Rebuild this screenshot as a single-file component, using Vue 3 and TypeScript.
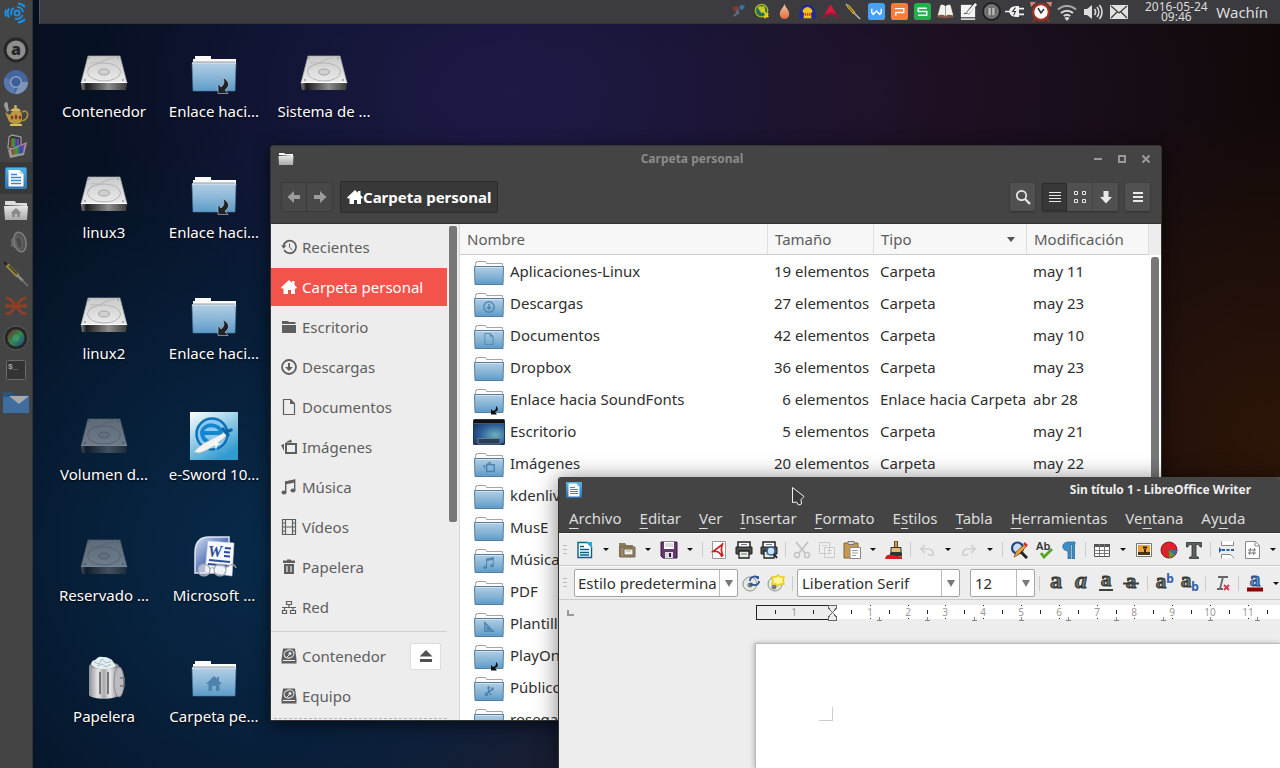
<script setup lang="ts">
interface Shortcut { icon: string; label: string; dim?: boolean }
interface FileRow { icon: string; emblem?: string; name: string; size: string; type: string; modified: string }
interface Tool { kind: 'icon' | 'arrow' | 'sep'; icon?: string; label?: string; off?: boolean }

const icon = (name: string, label: string, off = false): Tool => ({ kind: 'icon', icon: name, label, off })
const arrow = (label: string): Tool => ({ kind: 'arrow', label })
const sep: Tool = { kind: 'sep' }

const dock = [
  { icon: 'd-amazon', label: 'Amazon' },
  { icon: 'd-chromium', label: 'Chromium' },
  { icon: 'd-teapot', label: 'Tetera' },
  { icon: 'd-laptop', label: 'Pantallas' },
  { icon: 'd-writer', label: 'LibreOffice Writer', active: true },
  { icon: 'd-home', label: 'Archivos' },
  { icon: 'd-speaker', label: 'Sonido' },
  { icon: 'd-jack', label: 'Conexiones de audio' },
  { icon: 'd-x', label: 'Xmind' },
  { icon: 'd-lens', label: 'Cámara' },
  { icon: 'd-term', label: 'Terminal' },
  { icon: 'd-mail', label: 'Correo' },
]

const trayA = ['t-sat', 't-globe', 't-drop', 't-head', 't-tri', 't-jack', 't-w', 't-p', 't-s', 't-book', 't-note', 't-pause', 't-plug']
const trayB = ['t-alarm', 't-wifi', 't-vol', 't-env']

const shortcuts: Shortcut[] = [
  { icon: 'hdd', label: 'Contenedor' },
  { icon: 'hdd', label: 'linux3' },
  { icon: 'hdd', label: 'linux2' },
  { icon: 'hdd', label: 'Volumen d...', dim: true },
  { icon: 'hdd', label: 'Reservado ...', dim: true },
  { icon: 'trash', label: 'Papelera' },
  { icon: 'folder-link', label: 'Enlace haci...' },
  { icon: 'folder-link', label: 'Enlace haci...' },
  { icon: 'folder-link', label: 'Enlace haci...' },
  { icon: 'esword', label: 'e-Sword 10...' },
  { icon: 'msword', label: 'Microsoft ...' },
  { icon: 'folder-home', label: 'Carpeta pe...' },
  { icon: 'hdd', label: 'Sistema de ...' },
]

const places = [
  { icon: 's-recent', label: 'Recientes' },
  { icon: 's-home', label: 'Carpeta personal', active: true },
  { icon: 's-folder', label: 'Escritorio' },
  { icon: 's-down', label: 'Descargas' },
  { icon: 's-doc', label: 'Documentos' },
  { icon: 's-pic', label: 'Imágenes' },
  { icon: 's-music', label: 'Música' },
  { icon: 's-film', label: 'Vídeos' },
  { icon: 's-bin', label: 'Papelera' },
  { icon: 's-net', label: 'Red' },
]

const files: FileRow[] = [
  { icon: 'folder', name: 'Aplicaciones-Linux', size: '19 elementos', type: 'Carpeta', modified: 'may 11' },
  { icon: 'folder', emblem: 's-down', name: 'Descargas', size: '27 elementos', type: 'Carpeta', modified: 'may 23' },
  { icon: 'folder', emblem: 's-doc', name: 'Documentos', size: '42 elementos', type: 'Carpeta', modified: 'may 10' },
  { icon: 'folder', name: 'Dropbox', size: '36 elementos', type: 'Carpeta', modified: 'may 23' },
  { icon: 'folder', emblem: 'link', name: 'Enlace hacia SoundFonts', size: '6 elementos', type: 'Enlace hacia Carpeta', modified: 'abr 28' },
  { icon: 'desktop', name: 'Escritorio', size: '5 elementos', type: 'Carpeta', modified: 'may 21' },
  { icon: 'folder', emblem: 's-pic', name: 'Imágenes', size: '20 elementos', type: 'Carpeta', modified: 'may 22' },
  { icon: 'folder', name: 'kdenlive', size: '', type: '', modified: '' },
  { icon: 'folder', name: 'MusE', size: '', type: '', modified: '' },
  { icon: 'folder', emblem: 's-music', name: 'Música', size: '', type: '', modified: '' },
  { icon: 'folder', name: 'PDF', size: '', type: '', modified: '' },
  { icon: 'folder', emblem: 'e-square', name: 'Plantillas', size: '', type: '', modified: '' },
  { icon: 'folder', emblem: 'link', name: 'PlayOnLinux', size: '', type: '', modified: '' },
  { icon: 'folder', emblem: 'e-share', name: 'Público', size: '', type: '', modified: '' },
  { icon: 'folder', name: 'rosegarden', size: '', type: '', modified: '' },
]

const menus = [
  ['', 'A', 'rchivo'], ['', 'E', 'ditar'], ['', 'V', 'er'], ['', 'I', 'nsertar'], ['', 'F', 'ormato'],
  ['E', 's', 'tilos'], ['', 'T', 'abla'], ['', 'H', 'erramientas'], ['Ve', 'n', 'tana'], ['Ay', 'u', 'da'],
]

const standardTools: Tool[] = [
  icon('w-new', 'Nuevo'), arrow('Más tipos'), icon('w-open', 'Abrir'), arrow('Recientes'), icon('w-save', 'Guardar'), arrow('Guardar como'),
  sep, icon('w-pdf', 'Exportar a PDF'), icon('w-print', 'Imprimir'), icon('w-preview', 'Vista previa'),
  sep, icon('w-cut', 'Cortar', true), icon('w-copy', 'Copiar', true), icon('w-paste', 'Pegar'), arrow('Pegado especial'), icon('w-brush', 'Clonar formato'),
  sep, icon('w-undo', 'Deshacer', true), arrow('Historial'), icon('w-redo', 'Rehacer', true), arrow('Historial de rehacer'),
  sep, icon('w-find', 'Buscar'), icon('w-spell', 'Ortografía'), icon('w-pilcrow', 'Marcas'),
  sep, icon('w-table', 'Tabla'), arrow('Tamaño de tabla'), icon('w-image', 'Imagen'), icon('w-chart', 'Gráfico'), icon('w-text', 'Cuadro de texto'),
  sep, icon('w-break', 'Salto de página'), icon('w-field', 'Campo'), arrow('Más campos'),
]

const formatTools: Tool[] = [
  sep, icon('w-bold', 'Negrita'), icon('w-italic', 'Cursiva'), icon('w-under', 'Subrayado'), icon('w-strike', 'Tachado'),
  sep, icon('w-super', 'Superíndice'), icon('w-sub', 'Subíndice'),
  sep, icon('w-clear', 'Limpiar formato'),
  sep, icon('w-color', 'Color de letra'), arrow('Colores'),
]

const pxPerCm = 37.8
const origin = 76
const cm = (n: number) => Math.round(origin + n * pxPerCm)
const rulerNumbers = Array.from({ length: 11 }, (_, i) => i + 1)
const rulerHalves = Array.from({ length: 14 }, (_, i) => i - 1.5)
const tabStops = Array.from({ length: 9 }, (_, i) => cm((i + 1) * 1.25))
</script>

<template>
  <main class="desktop">
    <svg class="sprite" aria-hidden="true">
      <defs>
        <linearGradient id="gFolder" x1="0" y1="0" x2="0" y2="1"><stop offset="0" stop-color="#b1cee4" /><stop offset=".55" stop-color="#86b4d6" /><stop offset="1" stop-color="#5c9bc9" /></linearGradient>
        <linearGradient id="gHdd" x1="0" y1="0" x2="0" y2="1"><stop offset="0" stop-color="#c9c9c9" /><stop offset="1" stop-color="#ececec" /></linearGradient>
        <linearGradient id="gHddF" x1="0" y1="0" x2="1" y2="0"><stop offset="0" stop-color="#8a8a8a" /><stop offset=".12" stop-color="#1c1c1c" /><stop offset=".6" stop-color="#8c8c8c" /><stop offset="1" stop-color="#3a3a3a" /></linearGradient>
        <linearGradient id="gCan" x1="0" y1="0" x2="1" y2="0"><stop offset="0" stop-color="#8f8f94" /><stop offset=".3" stop-color="#e6e6e8" /><stop offset=".5" stop-color="#a9a9ad" /><stop offset=".7" stop-color="#e9e9ea" /><stop offset="1" stop-color="#85858a" /></linearGradient>
        <linearGradient id="gSword" x1="0" y1="0" x2=".6" y2="1"><stop offset="0" stop-color="#fff" /><stop offset="1" stop-color="#2f9bd0" /></linearGradient>
        <linearGradient id="gWord" x1="0" y1="0" x2="1" y2="1"><stop offset="0" stop-color="#d8e0f2" /><stop offset=".5" stop-color="#5c79bd" /><stop offset="1" stop-color="#2c4a94" /></linearGradient>
        <linearGradient id="gWriter" x1="0" y1="0" x2="0" y2="1"><stop offset="0" stop-color="#53b5e8" /><stop offset="1" stop-color="#2a6fb5" /></linearGradient>
        <linearGradient id="gGray" x1="0" y1="0" x2="0" y2="1"><stop offset="0" stop-color="#e6e6e6" /><stop offset="1" stop-color="#a9a9a9" /></linearGradient>
        <linearGradient id="gDrop" x1="0" y1="0" x2="0" y2="1"><stop offset="0" stop-color="#f6c8a4" /><stop offset="1" stop-color="#e0693a" /></linearGradient>
        <radialGradient id="gDesk" cx=".7" cy=".6" r=".8"><stop offset="0" stop-color="#6fb0bf" /><stop offset=".6" stop-color="#2f619a" /><stop offset="1" stop-color="#1e3c6a" /></radialGradient>
        <linearGradient id="gLens" x1="0" y1="0" x2="1" y2="1"><stop offset="0" stop-color="#7a2a22" /><stop offset=".5" stop-color="#2e8a4e" /><stop offset="1" stop-color="#28408c" /></linearGradient>
        <linearGradient id="gRgb" x1="0" y1="0" x2="1" y2="0"><stop offset="0" stop-color="#b03228" /><stop offset=".4" stop-color="#3e9c36" /><stop offset=".7" stop-color="#3048b0" /><stop offset="1" stop-color="#b03aa0" /></linearGradient>
      </defs>
    </svg>

    <svg class="symbols" aria-hidden="true">
      <!-- launcher -->
      <symbol id="d-logo" viewBox="0 0 26 26"><g fill="none" stroke="#1a8fe3" stroke-width="2"><circle cx="14" cy="13" r="2.5" /><path d="M11 7.800a6 6 0 0 0-2.500 7.500M12 18.700a6 6 0 0 0 7.500-3.700M20 12a6 6 0 0 0-6-5" /><path d="M6 8.500a9 9 0 0 0 0 9M3 9.500a10 10 0 0 0 0 7M15 3.500a10 10 0 0 1 7 3.500M15 22.500a10 10 0 0 0 7-3.500" /></g></symbol>
      <symbol id="d-amazon" viewBox="0 0 26 26"><circle cx="13" cy="13" r="12.500" fill="#272727" /><circle cx="13" cy="13" r="9.500" fill="#8e8e8e" /><text x="13" y="18" text-anchor="middle" font-family="Noto Sans,sans-serif" font-weight="900" font-size="16" fill="#272727">a</text></symbol>
      <symbol id="d-chromium" viewBox="0 0 26 26"><circle cx="13" cy="13" r="12" fill="#44669c" /><path d="M13 13 1.800 8.500A12 12 0 0 0 11 24.800z" fill="#5878ae" /><path d="M13 13h12a12 12 0 0 1-13.500 11.900L17 15z" fill="#7d93b8" /><circle cx="13" cy="13" r="6" fill="#8fa2c0" /><circle cx="13" cy="13" r="4.600" fill="#3c5f9c" /></symbol>
      <symbol id="d-teapot" viewBox="0 0 26 26"><path d="M1 5c0-5 4-5 4-1s1 3 1 6l-2 1z" fill="#9b9b9b" /><path d="M2 11l5 3c1-3 3-5 6-5s6 2 6 5v5c-1 3-3 4-6 4s-7-1-8-5z" fill="#b99a41" /><path d="M19 11c7-4 8 7 0 9" fill="none" stroke="#a98d3a" stroke-width="1.800" /><path d="M7 10c2-4 9-4 11 0z" fill="#d0b661" /><circle cx="12.500" cy="5.500" r="1.500" fill="#d0b661" /><path d="M9 14l1.500 2.500L9 19l-1.500-2.500zM13 13l1.500 3-1.500 3-1.500-3zM17 14l1.500 2.500L17 19l-1.500-2.500z" fill="#8e2c33" /><path d="M7 24h12" stroke="#d8bd62" stroke-width="2" /></symbol>
      <symbol id="d-laptop" viewBox="0 0 26 26"><path d="M6 4l3-2 9 2v13L5 15z" fill="#333" stroke="#999" stroke-width="1.300" /><path d="M8 5l8 1v9l-9-1z" fill="url(#gRgb)" /><path d="M5 17l19-8-3 13-14 3z" fill="#999" /><path d="M8 17l14-6-2 9-11 2z" fill="url(#gRgb)" /></symbol>
      <symbol id="d-writer" viewBox="0 0 26 26"><rect x="2.500" y="2.500" width="21" height="21" rx="1.500" fill="url(#gWriter)" stroke="#3784bd" /><path d="M5.500 5h11l4 4v12.500h-15z" fill="#fff" /><path d="M16.500 5v4h4z" fill="#bcdcf0" /><path d="M8 9.500h6M8 12.500h10M8 15.500h10M8 18.500h10" stroke="#3f86c4" stroke-width="1.300" /></symbol>
      <symbol id="w-app" viewBox="0 0 16 16"><rect width="16" height="16" rx="1" fill="url(#gWriter)" /><path d="M2.500 1.500h8l3 3v10h-11z" fill="#fff" /><path d="M10.500 1.500v3h3z" fill="#bcdcf0" /><path d="M4 5.500h5M4 7.500h8M4 9.500h8M4 11.500h8" stroke="#3f86c4" /></symbol>
      <symbol id="d-home" viewBox="0 0 26 26"><path d="M2 8V4h10l1 2h11v3z" fill="#ddd" /><path d="M1 9h24l-1 14H2z" fill="url(#gGray)" /><path d="M13 11l5.500 5H17v4h-3v-3h-2v3H9v-4H7.500z" fill="#8b8b8b" /></symbol>
      <symbol id="d-speaker" viewBox="0 0 26 26"><path d="M8 10l6-4v14l-6-3z" fill="#666" /><ellipse cx="17" cy="13" rx="6" ry="10" fill="#555" stroke="#7d7d7d" stroke-width="1.500" transform="rotate(-12 17 13)" /><ellipse cx="16" cy="13.500" rx="3" ry="6" fill="#4a4a4a" stroke="#6d6d6d" transform="rotate(-12 16 13.500)" /></symbol>
      <symbol id="d-jack" viewBox="0 0 26 26"><path d="M1 1l5 5" stroke="#222" stroke-width="2" /><path d="M4 4l11 11" stroke="#94853f" stroke-width="4" /><path d="M6 5l8 8" stroke="#3b351c" stroke-width="1.300" /><path d="M14 14l6 6" stroke="#8b8b8b" stroke-width="2.500" /><path d="M19 19l6 6" stroke="#777" stroke-width="1.500" /></symbol>
      <symbol id="d-x" viewBox="0 0 26 26"><path d="M3 5c7 0 8 8 10 8s3-8 10-8M3 21c7 0 8-8 10-8s3 8 10 8M2 13h22" fill="none" stroke="#8d4027" stroke-width="3" /></symbol>
      <symbol id="d-lens" viewBox="0 0 26 26"><circle cx="13" cy="13" r="12" fill="#272727" stroke="#5a5a5a" /><circle cx="13" cy="13" r="8.500" fill="url(#gLens)" /><circle cx="13" cy="13" r="3.500" fill="#409a78" opacity=".7" /></symbol>
      <symbol id="d-term" viewBox="0 0 26 26"><rect x="3.500" y="3.500" width="19" height="19" rx="1" fill="#343434" stroke="#6a6a6a" /><text x="5" y="12" font-family="Liberation Mono,monospace" font-weight="700" font-size="8" fill="#a5a5a5">$_</text></symbol>
      <symbol id="d-mail" viewBox="0 0 26 26"><path d="M0 3h9l3 3h14v18H0z" fill="#2c5378" /><path d="M0 8h26v16H0z" fill="#3f6d9f" /><path d="M6 7h20l-10 8z" fill="#a9a9a9" /></symbol>

      <!-- tray -->
      <symbol id="t-sat" viewBox="0 0 20 20"><path d="M3 6l5-2 3 4-4 3z" fill="#7d3a35" /><path d="M10 6l3-3 4 1-3 5z" fill="#3f6d9f" /><path d="M7 9l3-1 1 4-3 2z" fill="#596a86" /><path d="M5 15l3-3" stroke="#777" stroke-width="1.500" /></symbol>
      <symbol id="t-globe" viewBox="0 0 20 20"><circle cx="10" cy="9" r="6.500" fill="#1e6b59" stroke="#a9b51c" stroke-width="1.500" /><path d="M6 6c2-3 4 0 7-2l1 5-4 3z" fill="#c8c41d" /><path d="M11 8l6 8M17 12l-4 5" stroke="#f0d020" stroke-width="2" fill="none" /></symbol>
      <symbol id="t-drop" viewBox="0 0 20 20"><path d="M10 2c1 4 5 6 5 11a5 5 0 0 1-10 0c0-5 4-7 5-11z" fill="url(#gDrop)" /></symbol>
      <symbol id="t-head" viewBox="0 0 20 20"><path d="M4 12a6 7 0 0 1 12 0v5H4z" fill="#f5c41c" /><path d="M3 12a7 8 0 0 1 14 0" fill="none" stroke="#1b2b9c" stroke-width="2.500" /><path d="M5 13h10" stroke="#e0401c" stroke-width="3" stroke-dasharray="1.500 .7" /><rect x="1.500" y="10" width="4.500" height="8" rx="2" fill="#20289a" /><rect x="14" y="10" width="4.500" height="8" rx="2" fill="#20289a" /></symbol>
      <symbol id="t-tri" viewBox="0 0 20 20"><path d="M10 2l8.500 15L10 13l-8.500 4z" fill="#d8193f" /><path d="M4 13l6-2 6 2 2.500 4L10 13l-8.500 4z" fill="#961538" /></symbol>
      <symbol id="t-jack" viewBox="0 0 20 20"><path d="M2 2l3 3" stroke="#bbb" stroke-width="1.500" /><path d="M4 4l7 8" stroke="#e0b83a" stroke-width="3" /><path d="M4 4l6 7" stroke="#473d16" stroke-width="1" /><path d="M11 12l6 6" stroke="#bbb" stroke-width="1.500" /></symbol>
      <symbol id="t-w" viewBox="0 0 20 20"><rect x="1" y="1" width="18" height="18" rx="3" fill="#45a2f7" /><path d="M5 7v4l1.500 2L10 9.500l3.500 3.500 1.500-2V7" fill="none" stroke="#fff" stroke-width="1.500" /></symbol>
      <symbol id="t-p" viewBox="0 0 20 20"><rect x="1" y="1" width="18" height="18" rx="3" fill="#fb7b3c" /><path d="M5 7h9.500v4H6v3.500" fill="none" stroke="#fff" stroke-width="1.500" /></symbol>
      <symbol id="t-s" viewBox="0 0 20 20"><rect x="1" y="1" width="18" height="18" rx="3" fill="#22b04c" /><path d="M14.500 6.500h-9v3.500h9v4h-9" fill="none" stroke="#fff" stroke-width="1.500" /></symbol>
      <symbol id="t-book" viewBox="0 0 20 20"><path d="M1 16l3-12 6 1 6-1 3 12-9 1z" fill="#7d5a45" /><path d="M2 14l3-11c2 0 4 0 5 2 1-2 3-2 5-2l3 11c-3-1-6-1-8 1-2-2-5-2-8-1z" fill="#f2f2ee" /><path d="M10 5v10" stroke="#999" /></symbol>
      <symbol id="t-note" viewBox="0 0 20 20"><rect x="2" y="3" width="15" height="13" fill="#f4f4f4" /><path d="M2 18h15" stroke="#f4f4f4" stroke-width="1.500" /><path d="M9 12l8-10" stroke="#333" stroke-width="3.500" /><path d="M8 13l1-3 8-9 2 2-8 9z" fill="#f4f4f4" /><path d="M5 12h4" stroke="#444" stroke-width="1" /></symbol>
      <symbol id="t-pause" viewBox="0 0 20 20"><circle cx="10" cy="10" r="9" fill="#5a5a5a" stroke="#1a1a1a" stroke-width="1.500" /><circle cx="10" cy="10" r="6.500" fill="#666" stroke="#8a8a8a" /><path d="M8 6v8M12 6v8" stroke="#bbb" stroke-width="2.500" /></symbol>
      <symbol id="t-plug" viewBox="0 0 20 20"><path d="M0 10h5c1-4 3-5 9-5v10c-6 0-8-1-9-5" fill="#f2f2f2" stroke="#f2f2f2" stroke-width="1.500" /><path d="M14 7h6M14 13h6" stroke="#f2f2f2" stroke-width="2" /><path d="M11 6l-3 4h3l-2 4" stroke="#3c3c3f" fill="none" stroke-width="1.200" /></symbol>
      <symbol id="t-alarm" viewBox="0 0 22 22"><path d="M1 6L0 1l6 0zM21 6l1-5-6 0z" fill="#d98079" /><circle cx="11" cy="11" r="8" fill="#fff" stroke="#9c3223" stroke-width="2.500" /><path d="M8 7l3 5 3-4" fill="none" stroke="#333" stroke-width="1.500" /><path d="M5 18l-2 3M17 18l2 3" stroke="#9c3223" stroke-width="2" /></symbol>
      <symbol id="t-wifi" viewBox="0 0 22 22"><g fill="none" stroke="#ddd" stroke-width="2"><path d="M2 8.500a13 13 0 0 1 18 0" stroke="#aaa" /><path d="M5 12a9 9 0 0 1 12 0M7.800 15a5 5 0 0 1 6.400 0" /></g><path d="M8.500 17a4 4 0 0 1 5 0L11 20z" fill="#ddd" /></symbol>
      <symbol id="t-vol" viewBox="0 0 22 22"><path d="M2 8h3l5-4v14l-5-4H2z" fill="#ddd" /><g fill="none" stroke="#ddd" stroke-width="1.600"><path d="M12.500 8a5 5 0 0 1 0 6M15 6a8 8 0 0 1 0 10M17.500 4a11 11 0 0 1 0 14" /></g></symbol>
      <symbol id="t-env" viewBox="0 0 22 22"><path d="M2 4h18v14H2z" fill="#e2e2e2" /><path d="M3 5l8 7 8-7M3 17l6-6M19 17l-6-6" fill="none" stroke="#3c3c3f" stroke-width="1.300" /></symbol>

      <!-- desktop objects -->
      <symbol id="hdd" viewBox="0 0 48 48"><path d="M8 7h32l7 27H1z" fill="url(#gHdd)" stroke="#a8a8a8" stroke-width=".7" /><path d="M1 34h46l-1 7H2z" fill="url(#gHddF)" /><path d="M1 33.500h46" stroke="#fff" /><ellipse cx="24" cy="23" rx="16.500" ry="9" fill="none" stroke="#b5b5b5" /><ellipse cx="24" cy="23" rx="5.500" ry="3" fill="#d0d0d0" stroke="#a5a5a5" /><path d="M10 14c5-1 9 1 13-2 3-2 7-3 11-3M8 20c2-4 8-5 12-6 4-2 6-4 8-4" fill="none" stroke="#bababa" /><g fill="#8e8e8e"><circle cx="9" cy="9" r=".8" /><circle cx="38" cy="9" r=".8" /><circle cx="5" cy="31" r=".9" /><circle cx="43" cy="31" r=".9" /></g></symbol>
      <symbol id="bigfolder" viewBox="0 0 48 48"><path d="M3 16V10h2V7h16v3h25v6z" fill="#fafafa" /><path d="M2 14h44l-1 28H3z" fill="url(#gFolder)" stroke="#4f7ea3" stroke-width=".6" /><path d="M2 14h44" stroke="#d9e8f3" stroke-width="1.500" /><path d="M3 13h42" stroke="#777" stroke-width=".7" /></symbol>
      <symbol id="linkbig" viewBox="0 0 12 17"><path d="M5.500.5c7 3 8 9 2.500 12.500l3 3.500H1V6.500L4 10C7 8 8 4 5.500.5z" fill="#1f2326" stroke="#ccd" stroke-width=".6" /></symbol>
      <symbol id="folder-link" viewBox="0 0 48 48"><use href="#bigfolder" /><use href="#linkbig" x="27" y="28" width="12" height="17" /></symbol>
      <symbol id="folder-home" viewBox="0 0 48 48"><use href="#bigfolder" /><path d="M24 22l8 8h-2.500v7H26v-5h-4v5h-3.500v-7H16zM27 23h2v4h-2z" fill="#4c82ab" /></symbol>
      <symbol id="trash" viewBox="0 0 48 48"><ellipse cx="24" cy="12" rx="15" ry="4" fill="#8f8f92" /><path d="M11 10c1-5 5-3 6-6 3-2 5-1 7-1 4 0 6 2 8 3l4 6c-6 5-20 5-25-2z" fill="#e3eef0" /><path d="M14 8l5 2 3-5 4 4 5-2M17 12l5-2 4 3 5-3" fill="none" stroke="#a7babd" /><path d="M9 12c3 4 27 4 30 0v29c-3 5-27 5-30 0z" fill="url(#gCan)" /><path d="M20 18v22M28 18v22" stroke="#77777b" stroke-width="2" /><ellipse cx="39" cy="28" rx="5" ry="15" fill="#bcbcc0" stroke="#8a8a8e" /><path d="M40 24h4v8h-4" fill="none" stroke="#77777c" stroke-width="1.500" /></symbol>
      <symbol id="esword" viewBox="0 0 48 48"><rect width="48" height="48" fill="url(#gSword)" /><circle cx="22" cy="22" r="15.500" fill="#8cc9f2" stroke="#0c72b8" stroke-width="2.500" /><path d="M11 21h20c-1-10-17-10-19-1 0 11 12 13 18 7" fill="none" stroke="#1387cf" stroke-width="4" /><path d="M4 40c8-10 20-13 31-20l3 2C29 31 20 38 9 41z" fill="#f3f3f3" stroke="#b5b5b5" stroke-width=".6" /><path d="M33 17l5 6M36 20l5-2" stroke="#0f68a5" stroke-width="3.500" stroke-linecap="round" /><path d="M26 26l1 5 4 1-4 1-1 6-1-6-4-1 4-1z" fill="#fff" /></symbol>
      <symbol id="msword" viewBox="0 0 48 48"><path d="M5 20C5 9 10 4 19 4h20v20L22 40H5z" fill="url(#gWord)" stroke="#dfe5f4" stroke-width="1.500" /><path d="M18 8l26 2-2 33-27-4z" fill="#f7f9fd" stroke="#ccd5ea" stroke-width=".6" /><text x="18" y="24" font-family="Liberation Serif,serif" font-style="italic" font-weight="700" font-size="16" fill="#2b4d9c">W</text><path d="M35 15l6 .5M34 19l6 .5M34 23l6 .5M19 27l21 2M18 31l21 2" stroke="#2b4d9c" stroke-width="2" /><g fill="#e7ebf2" fill-opacity=".6" stroke="#a5a5a5" stroke-width="1.200"><circle cx="14" cy="37" r="6" /><circle cx="30" cy="37" r="6" /><path d="M20 36c2-2 3-2 4 0M36 35c4-5 9-4 10 0" fill="none" /></g></symbol>

      <!-- list icons -->
      <symbol id="folder" viewBox="0 0 32 32"><path d="M2.500 12V6.500h1v-1h9l1 2h16V12" fill="#fcfcfc" stroke="#a5a5a5" /><path d="M1.500 10.500h29l-.5 18H2z" fill="url(#gFolder)" stroke="#547e9f" /><path d="M2.500 11.500h27" stroke="#cfe2f0" /></symbol>
      <symbol id="desktop" viewBox="0 0 32 32"><rect x="0" y="3" width="32" height="26" rx="1.500" fill="#1d3558" /><rect x="1" y="7" width="30" height="20" fill="url(#gDesk)" /><path d="M1 4h30v3H1z" fill="#111" /><path d="M1 7.500h30" stroke="#555" /><path d="M5 22.500h22V28H5z" fill="#2a3e58" stroke="#7b93a9" stroke-width=".7" /></symbol>
      <symbol id="link" viewBox="0 0 16 16"><path d="M11 6c3 3 2 5-1 6l2 2.500H6V9l2 2c3-1 3-2 3-5z" fill="#111" /></symbol>
      <symbol id="e-square" viewBox="0 0 16 16"><path d="M2.500 2.500v11h11zM5.500 9v2h3z" fill="none" stroke="currentColor" stroke-width="2" /></symbol>
      <symbol id="e-share" viewBox="0 0 16 16"><path d="M4 13l3-4 6-3M8 9L7 4" stroke="currentColor" stroke-width="1.800" /><circle cx="4.500" cy="12.500" r="2.500" fill="currentColor" /><circle cx="12.500" cy="5" r="2" fill="currentColor" /><circle cx="7.500" cy="3.500" r="1.800" fill="currentColor" /><circle cx="10" cy="12" r="1.500" fill="currentColor" /></symbol>
      <symbol id="s-recent" viewBox="0 0 16 16"><path d="M3.200 11A6.300 6.300 0 1 0 2.500 7" fill="none" stroke="currentColor" stroke-width="1.700" /><path d="M0 6.500h5.500L2.700 9.800z" fill="currentColor" /><path d="M8.500 4.500V8l2.500 3" fill="none" stroke="currentColor" /></symbol>
      <symbol id="s-home" viewBox="0 0 16 16"><path d="M8 1l3 2.800V2h2.500v4L16 8.500 15 9.500h-1V15h-4v-4H7v4H2.500V9.500H1l-1-1z" fill="currentColor" /></symbol>
      <symbol id="s-folder" viewBox="0 0 16 16"><path d="M1 5V2h6l1 1h6.500v2zM1 6h14v8H1z" fill="currentColor" /></symbol>
      <symbol id="s-down" viewBox="0 0 16 16"><circle cx="8" cy="8" r="7" fill="none" stroke="currentColor" stroke-width="1.800" /><path d="M7 4h2v4h3l-4 4-4-4h3z" fill="currentColor" /></symbol>
      <symbol id="s-doc" viewBox="0 0 16 16"><path d="M2.500.5h7l4 4v11h-11z" fill="none" stroke="currentColor" stroke-width="1.200" /><path d="M9 .5V5h4.500z" fill="currentColor" /></symbol>
      <symbol id="s-pic" viewBox="0 0 16 16"><path d="M5 5h10v9H5z" fill="none" stroke="currentColor" stroke-width="2" /><path d="M4 3.500l6-3 1 3zM3 5v7L0 6z" fill="currentColor" /></symbol>
      <symbol id="s-music" viewBox="0 0 16 16"><path d="M4.700 13V3l9-2v10" fill="none" stroke="currentColor" stroke-width="1.400" /><path d="M4 2.500l10-2v3L4 5.500z" fill="currentColor" /><ellipse cx="3" cy="13.500" rx="2.500" ry="2" fill="currentColor" /><ellipse cx="12" cy="11.500" rx="2.500" ry="2" fill="currentColor" /></symbol>
      <symbol id="s-film" viewBox="0 0 16 16"><path d="M1.500.5h13v15h-13zM4.500.5v15M11.500.5v15M4.500 8h7M1.500 4h3M1.500 8h3M1.500 12h3M11.500 4h3M11.500 8h3M11.500 12h3" fill="none" stroke="currentColor" stroke-width="1.200" /></symbol>
      <symbol id="s-bin" viewBox="0 0 16 16"><path d="M2 1.500h4v-1h4v1h4v2.500H2zM3 5h10v10H3z" fill="currentColor" /><path d="M6 7v6M10 7v6" stroke="#ededed" stroke-width="1.200" /></symbol>
      <symbol id="s-net" viewBox="0 0 16 16"><path d="M5.500 2.500h5v3h-5zM1.500 11.500h4v3h-4zM9.500 11.500h5v3h-5zM8 6v3M1 8.500h14M3.500 9v3M12 9v3" fill="none" stroke="currentColor" stroke-width="1.200" /></symbol>
      <symbol id="s-disk" viewBox="0 0 16 16"><path d="M2 .5h12l1.500 11v4H.5v-4z" fill="currentColor" /><path d="M2 12.500h12" stroke="#ededed" /><ellipse cx="8" cy="6" rx="5" ry="4" fill="none" stroke="#ededed" transform="rotate(-20 8 6)" /><circle cx="9" cy="5.500" r="1.500" fill="#ededed" /><path d="M5 10l3-3" stroke="#ededed" /></symbol>
      <symbol id="eject" viewBox="0 0 16 16"><path d="M8 2l6.500 6.500h-13zM2 11h12v3H2z" fill="currentColor" /></symbol>

      <!-- file manager buttons -->
      <symbol id="b-back" viewBox="0 0 16 16"><path d="M8 2v4h6v4H8v4L1.500 8z" fill="currentColor" /></symbol>
      <symbol id="b-next" viewBox="0 0 16 16"><path d="M8 2v4H2v4h6v4l6.500-6z" fill="currentColor" /></symbol>
      <symbol id="b-find" viewBox="0 0 16 16"><circle cx="6.500" cy="6.500" r="4.700" fill="none" stroke="currentColor" stroke-width="1.700" /><path d="M10 10l5 5" stroke="currentColor" stroke-width="2.300" /></symbol>
      <symbol id="b-list" viewBox="0 0 16 16"><path d="M2 3.500h12M2 6.500h12M2 9.500h12M2 12.500h12" stroke="currentColor" /></symbol>
      <symbol id="b-grid" viewBox="0 0 16 16"><path d="M2.500 2.500h3v3h-3zM10.500 2.500h3v3h-3zM2.500 10.500h3v3h-3zM10.500 10.500h3v3h-3z" fill="none" stroke="currentColor" /></symbol>
      <symbol id="b-down" viewBox="0 0 16 16"><path d="M5.500 2h5v6H14l-6 6.500L2 8h3.500z" fill="currentColor" /></symbol>
      <symbol id="b-menu" viewBox="0 0 16 16"><path d="M3 4h10M3 8h10M3 12h10" stroke="currentColor" stroke-width="2" /></symbol>
      <symbol id="b-min" viewBox="0 0 16 16"><path d="M4 8h8" stroke="currentColor" stroke-width="2" /></symbol>
      <symbol id="b-max" viewBox="0 0 16 16"><path d="M5 5h6v6H5z" fill="none" stroke="currentColor" stroke-width="2" /></symbol>
      <symbol id="b-close" viewBox="0 0 16 16"><path d="M4.500 4.500l7 7M11.500 4.500l-7 7" stroke="currentColor" stroke-width="2.200" /></symbol>
      <symbol id="w-folder" viewBox="0 0 16 16"><path d="M1 4V2h5l1 1h8v2z" fill="#fff" /><path d="M.5 5h15l-.5 9H1z" fill="url(#gGray)" /></symbol>

      <!-- writer toolbar -->
      <symbol id="w-new" viewBox="0 0 18 18"><path d="M2 1.500h9.500l4 4v11H2z" fill="#fff" stroke="#0f5e86" stroke-width="1.400" /><path d="M10 1h6v6z" fill="#2aa6d8" /><path d="M4 5.500h4M4 8.500h9M4 11.500h9M4 14h9" stroke="#0f5e86" stroke-width="1.300" /></symbol>
      <symbol id="w-open" viewBox="0 0 18 18"><path d="M1 2h6l1.500 2H15v3H3v9H1z" fill="#8a7b5e" /><path d="M2 6h15v10H2z" fill="#9a8a6a" stroke="#6e614a" /><path d="M6 8h9v6H6z" fill="#f4f2ec" stroke="#6e614a" /><path d="M8 10h5" stroke="#aaa" /></symbol>
      <symbol id="w-save" viewBox="0 0 18 18"><path d="M1 1h16v16H3l-2-2z" fill="#6b3576" stroke="#321839" /><path d="M4 1h10v7H4z" fill="#fff" /><path d="M5 3h8M5 5h8" stroke="#bbb" /><path d="M5 11h8v6H5z" fill="#ddd" /><path d="M9 12h2v4H9z" fill="#321839" /></symbol>
      <symbol id="w-pdf" viewBox="0 0 18 18"><path d="M2.500.5h13v17h-13z" fill="#fff" stroke="#999" /><path d="M13 3L3 10.500h4c3 1 4 3 5 5.500M13 2c-2 4-2 9 0 13" fill="none" stroke="#cc1f1f" stroke-width="1.600" /></symbol>
      <symbol id="w-print" viewBox="0 0 18 18"><path d="M3 1h12v6H3z" fill="#fff" stroke="#222" stroke-width="1.500" /><path d="M1 6h16v7H1z" fill="#4c4f4d" stroke="#222" /><path d="M4 10h10v7H4z" fill="#e4f0e0" stroke="#222" stroke-width="1.300" /><path d="M6 3.500h6M6 13h6" stroke="#7a7a7a" /></symbol>
      <symbol id="w-preview" viewBox="0 0 18 18"><use href="#w-print" /><circle cx="11" cy="10" r="4" fill="#cfe2f5" stroke="#2f5c9c" stroke-width="1.500" /><path d="M14 13l3 4" stroke="#222" stroke-width="2" /></symbol>
      <symbol id="w-cut" viewBox="0 0 18 18"><path d="M3 1l9 11M15 1L6 12" stroke="#777" stroke-width="1.800" /><circle cx="4" cy="14" r="2.600" fill="none" stroke="#777" stroke-width="1.500" /><circle cx="14" cy="14" r="2.600" fill="none" stroke="#777" stroke-width="1.500" /></symbol>
      <symbol id="w-copy" viewBox="0 0 18 18"><path d="M1.500 1.500h10v11h-10zM6.500 6.500h10v10h-10z" fill="#f6f6f6" stroke="#888" /><path d="M4 4.500h5M9 9.500h5M9 12.500h5" stroke="#999" /></symbol>
      <symbol id="w-paste" viewBox="0 0 18 18"><path d="M1 2h14v15H1z" fill="#c69a55" stroke="#8a6428" /><path d="M5 .500h6v3H5z" fill="#ddd" stroke="#777" /><path d="M7 6.500h10.500v11H7z" fill="#fff" stroke="#888" /><path d="M9 9.500h6M9 12h6M9 14.500h4" stroke="#999" /></symbol>
      <symbol id="w-brush" viewBox="0 0 18 18"><path d="M9.500 0h3v7h-3z" fill="#d89a4a" stroke="#6b4316" /><path d="M6 6.500h10v5H6z" fill="#e0c070" stroke="#333" /><path d="M5 11.500h12v4H5z" fill="#333" /><path d="M1 15c3-2 4-1 6-1l10 2v2H0z" fill="#d81c1c" /></symbol>
      <symbol id="w-undo" viewBox="0 0 18 18"><path d="M7 4L3 8l4 4M3 8h8c4 0 4 3 4 6h-5" fill="none" stroke="#999" stroke-width="1.600" /></symbol>
      <symbol id="w-redo" viewBox="0 0 18 18"><path d="M11 4l4 4-4 4M15 8H7c-4 0-4 3-4 6h5" fill="none" stroke="#999" stroke-width="1.600" /></symbol>
      <symbol id="w-find" viewBox="0 0 18 18"><circle cx="7.500" cy="7" r="5.500" fill="#c9dcf2" stroke="#20448c" stroke-width="2.200" /><path d="M11 11l6 6" stroke="#222" stroke-width="3" /><path d="M4 16l2-5 9-8 2 2-9 9z" fill="#f0a030" stroke="#6b4316" stroke-width=".7" /><path d="M14 2l3 3" stroke="#d83030" stroke-width="2.500" /></symbol>
      <symbol id="w-spell" viewBox="0 0 18 18"><text x="1" y="9" font-family="Noto Sans,sans-serif" font-weight="600" font-size="11" fill="#333">Ab</text><path d="M6 12l3 4 8-8" fill="none" stroke="#55a51c" stroke-width="2.800" /></symbol>
      <symbol id="w-pilcrow" viewBox="0 0 18 18"><path d="M15 1H8C1 1 1 10 8 10v8h2.500V3.500H12V18h2.500V3.500H15z" fill="#3c8ec8" stroke="#1f6193" stroke-width=".7" /></symbol>
      <symbol id="w-table" viewBox="0 0 18 18"><path d="M1.500 3.500h15v12h-15z" fill="#fff" stroke="#555" /><path d="M1 3h16v3H1z" fill="#555" /><path d="M1 9.500h16M1 12.500h16M6.500 3v12M11.500 3v12" stroke="#777" /></symbol>
      <symbol id="w-image" viewBox="0 0 18 18"><path d="M1.500 2.500h15v13h-15z" fill="#fff" stroke="#777" /><path d="M3 4h12v10H3z" fill="#e9a33a" /><path d="M3 11h12v3H3z" fill="#513410" /><path d="M10 12V8M8 6.500h4" stroke="#2c1d0a" stroke-width="1.800" /></symbol>
      <symbol id="w-chart" viewBox="0 0 18 18"><circle cx="9" cy="9" r="8" fill="#d8242c" stroke="#9c1218" /><path d="M9 9v8a8 8 0 0 0 6-3z" fill="#5c9a34" /><path d="M9 9l6 5a8 8 0 0 0 2-5z" fill="#3c6ab0" /></symbol>
      <symbol id="w-text" viewBox="0 0 18 18"><path d="M1.500 1.500h15V6H15c-.5-2-1-2.500-4-2.500V14c0 1.500.5 2 2.500 2v1.500h-9V16C6.500 16 7 15.500 7 14V3.500C4 3.500 3.500 4 3 6H1.500z" fill="#5b625e" stroke="#2c302e" stroke-width=".8" /></symbol>
      <symbol id="w-break" viewBox="0 0 18 18"><path d="M3.500.5v4h12v-4M3.500 17.500v-4h9l3 3v1" fill="#fff" stroke="#888" /><path d="M1 6v6l3-3z" fill="#1d5fa6" /><path d="M4 9h13" stroke="#1d5fa6" stroke-width="2" stroke-dasharray="3 1.500" /></symbol>
      <symbol id="w-field" viewBox="0 0 18 18"><path d="M2.500.5h10l4 4v13h-14z" fill="#fff" stroke="#888" /><path d="M12 1v4h4" fill="none" stroke="#888" /><path d="M7.500 7l-1 7M11.500 7l-1 7M5 9h8M5 12h8" stroke="#777" /></symbol>
      <symbol id="w-refresh" viewBox="0 0 18 18"><circle cx="8" cy="10" r="7" fill="#e6e9e2" stroke="#8d918a" /><circle cx="8" cy="11" r="2.500" fill="#7a7d78" /><path d="M8 7c0-5 7-6 8-2V2M17 7c0 5-7 5-8 2v3" fill="none" stroke="#2d5797" stroke-width="1.800" /></symbol>
      <symbol id="w-newstyle" viewBox="0 0 18 18"><circle cx="8" cy="10" r="7" fill="#e6e9e2" stroke="#8d918a" /><circle cx="7" cy="13" r="2.500" fill="#7a7d78" /><path d="M11 1l2 2 4 0-1 4 1 3-4 0-2 2-2-2-4 0 1-3-1-4h4z" fill="#fff6a0" stroke="#e8cd1c" stroke-width="1.600" /></symbol>
      <symbol id="w-bold" viewBox="0 0 20 20"><text class="ga" x="10" y="15">a</text></symbol>
      <symbol id="w-italic" viewBox="0 0 20 20"><text class="ga gi" x="10" y="15">a</text></symbol>
      <symbol id="w-under" viewBox="0 0 20 20"><text class="ga gs" x="10" y="13">a</text><path d="M3 17h14" stroke="#3c413e" stroke-width="2" /></symbol>
      <symbol id="w-strike" viewBox="0 0 20 20"><text class="ga gs" x="10" y="15">a</text><path d="M2 10.500h16" stroke="#3c413e" stroke-width="2" /></symbol>
      <symbol id="w-super" viewBox="0 0 20 20"><text class="ga gs" x="7" y="15">a</text><text class="gb" x="16" y="10">b</text></symbol>
      <symbol id="w-sub" viewBox="0 0 20 20"><text class="ga gs" x="7" y="14">a</text><text class="gb" x="16" y="18">b</text></symbol>
      <symbol id="w-clear" viewBox="0 0 20 20"><path d="M6 4h10M11 4L8 16M5 16h6" fill="none" stroke="#666" stroke-width="1.800" /><path d="M12 12l5 5M17 12l-5 5" stroke="#d8344c" stroke-width="1.800" /></symbol>
      <symbol id="w-color" viewBox="0 0 20 20"><text class="ga gs blue" x="10" y="13">a</text><path d="M2 14.500h16v4H2z" fill="#8a0000" /></symbol>
    </svg>

    <nav class="dock" aria-label="Lanzador">
      <button class="logo" aria-label="Menú"><svg><use href="#d-logo" /></svg></button>
      <button v-for="d in dock" :key="d.icon" :class="{ active: d.active }" :aria-label="d.label"><svg><use :href="'#' + d.icon" /></svg></button>
    </nav>

    <header class="panel">
      <div class="tray">
        <svg v-for="t in trayA" :key="t" aria-hidden="true"><use :href="'#' + t" /></svg>
      </div>
      <div class="tray wide">
        <svg v-for="t in trayB" :key="t" aria-hidden="true"><use :href="'#' + t" /></svg>
      </div>
      <time class="clock"><span>2016-05-24</span><span>09:46</span></time>
      <span class="user">Wachín</span>
    </header>

    <ul class="shortcuts">
      <li v-for="(s, i) in shortcuts" :key="i">
        <svg :class="{ dim: s.dim }" aria-hidden="true"><use :href="'#' + s.icon" /></svg>
        <span>{{ s.label }}</span>
      </li>
    </ul>

    <section class="window files">
      <div class="titlebar">
        <svg class="appicon" aria-hidden="true"><use href="#w-folder" /></svg>
        <h2>Carpeta personal</h2>
        <div class="controls">
          <button aria-label="Minimizar"><svg><use href="#b-min" /></svg></button>
          <button aria-label="Maximizar"><svg><use href="#b-max" /></svg></button>
          <button aria-label="Cerrar"><svg><use href="#b-close" /></svg></button>
        </div>
      </div>
      <div class="headerbar">
        <div class="group nav">
          <button aria-label="Atrás"><svg><use href="#b-back" /></svg></button>
          <button aria-label="Adelante"><svg><use href="#b-next" /></svg></button>
        </div>
        <button class="path"><svg aria-hidden="true"><use href="#s-home" /></svg>Carpeta personal</button>
        <span class="grow"></span>
        <div class="group"><button aria-label="Buscar"><svg><use href="#b-find" /></svg></button></div>
        <div class="group">
          <button class="on" aria-label="Vista de lista"><svg><use href="#b-list" /></svg></button>
          <button class="mid" aria-label="Vista de iconos"><svg><use href="#b-grid" /></svg></button>
          <button aria-label="Opciones de vista"><svg><use href="#b-down" /></svg></button>
        </div>
        <div class="group"><button aria-label="Menú"><svg><use href="#b-menu" /></svg></button></div>
      </div>
      <div class="browser">
        <aside class="sidebar">
          <nav class="places">
            <a v-for="p in places" :key="p.label" href="#" :class="{ active: p.active }"><svg aria-hidden="true"><use :href="'#' + p.icon" /></svg>{{ p.label }}</a>
            <hr />
            <div class="device"><a href="#"><svg aria-hidden="true"><use href="#s-disk" /></svg>Contenedor</a><button aria-label="Expulsar"><svg><use href="#eject" /></svg></button></div>
            <a href="#"><svg aria-hidden="true"><use href="#s-disk" /></svg>Equipo</a>
            <span class="more"></span>
          </nav>
          <div class="scroll"><i></i></div>
        </aside>
        <div class="list">
          <table>
            <colgroup><col /><col class="c-size" /><col class="c-type" /><col class="c-mod" /></colgroup>
            <thead>
              <tr><th>Nombre</th><th>Tamaño</th><th class="sorted"><span>Tipo</span></th><th>Modificación</th></tr>
            </thead>
            <tbody>
              <tr v-for="f in files" :key="f.name">
                <td class="name"><div><span class="ficon"><svg aria-hidden="true"><use :href="'#' + f.icon" /></svg><svg v-if="f.emblem" :class="f.emblem === 'link' ? 'arrowmark' : 'emblem'" aria-hidden="true"><use :href="'#' + f.emblem" /></svg></span>{{ f.name }}</div></td>
                <td class="size">{{ f.size }}</td>
                <td>{{ f.type }}</td>
                <td>{{ f.modified }}</td>
              </tr>
            </tbody>
          </table>
          <div class="vbar"><i></i></div>
        </div>
      </div>
    </section>

    <section class="window writer">
      <div class="titlebar">
        <svg class="appicon" aria-hidden="true"><use href="#w-app" /></svg>
        <h2>Sin título 1 - LibreOffice Writer</h2>
      </div>
      <nav class="menubar">
        <button v-for="m in menus" :key="m.join('')">{{ m[0] }}<u>{{ m[1] }}</u>{{ m[2] }}</button>
      </nav>
      <div class="toolbar first">
        <span class="grip"></span>
        <template v-for="(t, i) in standardTools" :key="i">
          <span v-if="t.kind === 'sep'" class="sep"></span>
          <button v-else-if="t.kind === 'arrow'" class="arr" :aria-label="t.label"></button>
          <button v-else class="tool" :class="{ off: t.off }" :aria-label="t.label"><svg><use :href="'#' + t.icon" /></svg></button>
        </template>
      </div>
      <div class="toolbar">
        <span class="grip"></span>
        <div class="combo style"><input value="Estilo predetermina" aria-label="Estilo de párrafo" /><button aria-label="Elegir estilo"></button></div>
        <button class="tool" aria-label="Actualizar estilo"><svg><use href="#w-refresh" /></svg></button>
        <button class="tool" aria-label="Estilo nuevo"><svg><use href="#w-newstyle" /></svg></button>
        <span class="sep"></span>
        <div class="combo font"><input value="Liberation Serif" aria-label="Tipo de letra" /><button aria-label="Elegir letra"></button></div>
        <div class="combo points"><input value="12" aria-label="Tamaño de letra" /><button aria-label="Elegir tamaño"></button></div>
        <template v-for="(t, i) in formatTools" :key="i">
          <span v-if="t.kind === 'sep'" class="sep"></span>
          <button v-else-if="t.kind === 'arrow'" class="arr" :aria-label="t.label"></button>
          <button v-else class="tool big" :aria-label="t.label"><svg><use :href="'#' + t.icon" /></svg></button>
        </template>
      </div>
      <div class="rulerrow">
        <span class="tabkind"></span>
        <svg class="ruler" aria-hidden="true">
          <rect x="76" y="0" width="2000" height="14" fill="#fff" />
          <rect x="0.5" y="0.5" width="76" height="14" fill="#ededed" stroke="#222" />
          <path v-for="h in rulerHalves" :key="h" :d="`M${cm(h)} 5v4`" stroke="#222" />
          <text :x="cm(-1)" y="11">1</text>
          <g v-for="n in rulerNumbers" :key="n"><text :x="cm(n)" y="11">{{ n }}</text><path :d="`M${cm(n)} 0v1M${cm(n)} 13v1`" stroke="#222" /></g>
          <path v-for="t in tabStops" :key="t" :d="`M${t} 12v3M${t - 2} 15.500h5`" stroke="#888" />
          <path d="M72.500 0h8v3l-4 4.500 4 4.500v3.500h-8V12l4-4.500-4-4.500z" fill="#ededed" stroke="#666" />
        </svg>
      </div>
      <div class="canvas"><div class="sheet"><i></i></div></div>
    </section>

    <svg class="pointer" viewBox="0 0 14 20" aria-hidden="true"><path d="M1.500 1.500v15l4-.5L7.500 19l3-1-.5-4.500 3-3z" fill="#3a3a3a" stroke="#f4f4f4" /></svg>
  </main>
</template>

<style>
html, body, #app { height: 100%; margin: 0; }
body { overflow: hidden; }
</style>

<style scoped>
* { box-sizing: border-box; }
.desktop {
  position: relative;
  height: 100%;
  overflow: hidden;
  font: 15px/20px "Noto Sans", sans-serif;
  color: #fff;
  background:
    radial-gradient(ellipse 420px 260px at 40% 12%, rgba(33, 25, 72, .85), transparent),
    radial-gradient(ellipse 420px 420px at 20% 72%, rgba(7, 43, 74, .95), transparent),
    radial-gradient(ellipse 260px 120px at 44% 100%, rgba(36, 30, 44, .7), transparent),
    radial-gradient(ellipse 360px 340px at 100% 58%, rgba(48, 22, 8, .9), transparent),
    radial-gradient(ellipse 380px 240px at 68% 12%, rgba(34, 18, 40, .8), transparent),
    linear-gradient(90deg, #050f20, #0c1632 40%, #140c18 75%, #110909);
}
button { font: inherit; color: inherit; background: none; border: 0; padding: 0; margin: 0; }
.sprite { position: absolute; width: 0; height: 0; }
.symbols { display: none; }
.ga { font: 700 24px "Liberation Serif", serif; fill: #6b736e; stroke: #2e3330; stroke-width: 1px; text-anchor: middle; }
.gi { font-style: italic; }
.gs { font-size: 21px; }
.gb { font: 700 12px "Noto Sans", sans-serif; fill: #2f5ea8; text-anchor: middle; }
.blue { fill: #5d8cc8; stroke: #24508e; }

.dock {
  position: absolute; top: 0; bottom: 0; left: 0; width: 33px;
  display: flex; flex-direction: column;
  background: #444; border-right: 1px solid #333;
}
.dock button { height: 32px; display: grid; place-items: center; }
.dock .logo { height: 26px; margin-bottom: 8px; }
.dock .active { background: #383838; }
.dock svg { width: 26px; height: 26px; display: block; }

.panel {
  margin-left: 39px; height: 24px; padding-right: 12px;
  display: flex; align-items: center; justify-content: flex-end;
  background: #3c3b3f; border-left: 1px solid #555; border-bottom: 1px solid #333;
  color: #ddd;
}
.tray { display: flex; }
.tray svg { width: 19px; height: 19px; margin: 0 2px; }
.tray.wide { margin-left: 2px; }
.tray.wide svg { width: 22px; height: 22px; margin: 0 2px; }
.clock { margin: 0 8px 0 12px; width: 64px; display: flex; flex-direction: column; text-align: center; font-size: 12px; line-height: 10px; }

.shortcuts {
  list-style: none; margin: 25px 0 0 49px; padding: 0;
  display: grid; grid-auto-flow: column; grid-template-rows: repeat(6, 121px); grid-auto-columns: 110px;
}
.shortcuts li { display: flex; flex-direction: column; align-items: center; gap: 4px; }
.shortcuts svg { width: 48px; height: 48px; }
.shortcuts .dim { opacity: .45; }
.shortcuts span { text-shadow: 0 1px 2px #000; white-space: nowrap; }

.window { position: absolute; display: flex; flex-direction: column; overflow: hidden; border-radius: 3px 3px 0 0; }
.files { top: 145px; left: 270px; right: 118px; bottom: 47px; border: 1px solid #333; background: #444; box-shadow: 0 4px 16px rgba(0, 0, 0, .55); }
.writer { top: 477px; left: 558px; right: 0; bottom: 0; border-left: 1px solid #333; background: #ededed; box-shadow: 0 2px 22px rgba(0, 0, 0, .5); color: #333; }
.titlebar { flex: none; height: 25px; display: flex; align-items: center; background: #444; }
.titlebar h2 { margin: 0; font-size: 12px; line-height: 16px; font-weight: 700; }
.appicon { width: 16px; height: 16px; margin-left: 7px; flex: none; }
.files h2 { flex: 1; margin-left: 4px; text-align: center; color: #8b8b8b; }
.controls { display: flex; margin-right: 3px; color: #999; }
.controls button { width: 24px; height: 24px; display: grid; place-items: center; }
.controls svg { width: 16px; height: 16px; }

.headerbar { flex: none; height: 53px; padding: 0 11px 0 10px; display: flex; align-items: center; gap: 7px; background: #444; border-bottom: 1px solid #333; }
.headerbar svg { width: 16px; height: 16px; display: block; }
.group { display: flex; border-radius: 2px; background: #505050; color: #e8e8e8; box-shadow: 0 1px 2px rgba(0, 0, 0, .3); }
.group button { width: 25px; height: 28px; display: grid; place-items: center; }
.group .on { background: #383838; border: 1px solid #2c2c2c; }
.group .mid { width: 26px; border-right: 1px solid #444; }
.nav.group { background: #484848; border: 1px solid #3a3a3a; color: #9c9c9c; box-shadow: none; }
.nav button:first-child { border-right: 1px solid #3a3a3a; }
.path { height: 32px; padding: 0 6px; display: flex; align-items: center; font-weight: 700; border: 1px solid #2c2c2c; border-radius: 2px; background: #383838; }
.grow { flex: 1; }

.browser { flex: 1; min-height: 0; display: flex; }
.sidebar { flex: none; width: 189px; display: flex; background: #ededed; color: #5e5e5e; border-right: 1px solid #d6d6d6; overflow: hidden; }
.places { flex: none; width: 176px; padding-top: 4px; display: flex; flex-direction: column; gap: 2px; }
.places a { flex: none; height: 38px; padding-left: 10px; display: flex; align-items: center; gap: 5px; color: inherit; text-decoration: none; }
.places svg { width: 16px; height: 16px; }
.places .active { background: #f2544c; color: #fff; }
.places hr { width: 100%; margin: 3px 0; border: 0; border-top: 1px solid #d0d0d0; }
.more { margin: 1px 0 0 3px; border-top: 1px dashed #b5b5b5; }
.device { display: flex; justify-content: space-between; align-items: center; padding-right: 6px; }
.device button { width: 31px; height: 27px; display: grid; place-items: center; background: #fff; border: 1px solid #dcdcdc; border-radius: 2px; color: #505050; }
.scroll { padding: 2px 0 0 2px; flex: 1; }
.scroll i { display: block; width: 8px; height: 60%; border-radius: 2px; background: #777; }

.list { flex: 1; min-width: 0; display: flex; background: #fff; color: #2f2f2f; }
table { flex: 1; width: 0; table-layout: fixed; border-collapse: separate; border-spacing: 0; }
.c-size { width: 106px; }
.c-type { width: 153px; }
.c-mod { width: 122px; }
th { height: 31px; padding: 0 7px; text-align: left; font-weight: 400; color: #5c5c5c; background: #f7f7f7; border-bottom: 1px solid #ccc; border-right: 1px solid #dedede; }
.sorted span { display: flex; justify-content: space-between; align-items: center; }
.sorted span::after { content: ""; margin-right: 4px; border: 4px solid transparent; border-top: 5px solid #555; border-bottom: 0; }
td { height: 32px; padding: 0 0 0 6px; white-space: nowrap; }
.size { text-align: right; padding-right: 5px; }
.name { padding: 0 0 0 13px; }
.name div { display: flex; align-items: center; gap: 5px; height: 30px; }
.ficon { position: relative; width: 32px; height: 30px; flex: none; }
.ficon svg { width: 32px; height: 32px; display: block; }
.ficon .emblem { position: absolute; left: 10px; top: 13px; width: 12px; height: 12px; color: #4d87b1; }
.ficon .arrowmark { position: absolute; right: 4px; bottom: -2px; width: 16px; height: 16px; }
.vbar { flex: none; width: 12px; padding: 33px 2px 0; background: linear-gradient(#ededed 31px, #fff 31px); }
.vbar i { display: block; height: 100%; border-radius: 3px 3px 0 0; background: #777; }

.writer h2 { margin: 0 29px 0 auto; color: #eee; }
.menubar { flex: none; height: 31px; display: flex; align-items: center; gap: 18px; padding: 2px 0 0 10px; background: #444; border-bottom: 1px solid #333; color: #ddd; }
.menubar u { text-underline-offset: 4px; text-decoration-thickness: 1px; text-decoration-skip-ink: none; }
.toolbar { flex: none; height: 34px; display: flex; align-items: center; border-bottom: 1px solid #ccc; border-top: 1px solid #fafafa; overflow: hidden; }
.toolbar.first { height: 33px; }
.grip { flex: none; width: 4px; height: 10px; margin: 0 5px 0 4px; background: repeating-linear-gradient(#bbb 0 1px, transparent 1px 4px); }
.tool { flex: none; width: 25px; height: 28px; display: grid; place-items: center; }
.tool svg { width: 18px; height: 18px; }
.big svg { width: 20px; height: 20px; }
.off { opacity: .35; }
.arr { flex: none; width: 17px; height: 28px; display: grid; place-items: center; }
.arr::after { content: ""; border: 3px solid transparent; border-top-color: #111; border-bottom: 0; }
.sep { flex: none; width: 8px; height: 15px; background: linear-gradient(#ccc, #ccc) 4px 0 / 1px 100% no-repeat; }
.combo { flex: none; height: 28px; display: flex; background: #fff; border: 1px solid #a5a5a5; border-radius: 2px; }
.combo input { flex: 1; min-width: 0; padding: 0 0 0 4px; border: 0; outline: 0; background: none; font: inherit; color: #2f2f2f; }
.combo button { width: 18px; display: grid; place-items: center; border-left: 1px solid #bbb; }
.combo button::after { content: ""; border: 4px solid transparent; border-top: 7px solid #777; border-bottom: 0; }
.style { width: 164px; margin: 0 0 0 2px; }
.style input { padding-left: 3px; }
.font { width: 163px; margin: 0 10px 0 1px; }
.points { width: 65px; }
.rulerrow { flex: none; height: 16px; margin-top: 5px; display: flex; align-items: flex-start; }
.tabkind { flex: none; width: 7px; height: 6px; margin: 5px 182px 0 8px; border-left: 2px solid #999; border-bottom: 2px solid #999; }
.ruler { flex: 1; min-width: 0; height: 16px; display: block; }
.ruler path { shape-rendering: crispEdges; }
.ruler text { font: 10px "Noto Sans", sans-serif; fill: #999; text-anchor: middle; }
.canvas { flex: 1; min-height: 0; display: flex; padding: 22px 0 0 196px; }
.sheet { flex: 1; background: #fff; border: solid #bbb; border-width: 1px 0 0 1px; box-shadow: -1px 0 5px rgba(0, 0, 0, .25); }
.sheet i { display: block; width: 14px; height: 14px; margin: 63px 0 0 63px; border: solid #ccc; border-width: 0 1px 1px 0; }
.pointer { position: absolute; left: 791px; top: 486px; width: 14px; height: 20px; }
</style>
